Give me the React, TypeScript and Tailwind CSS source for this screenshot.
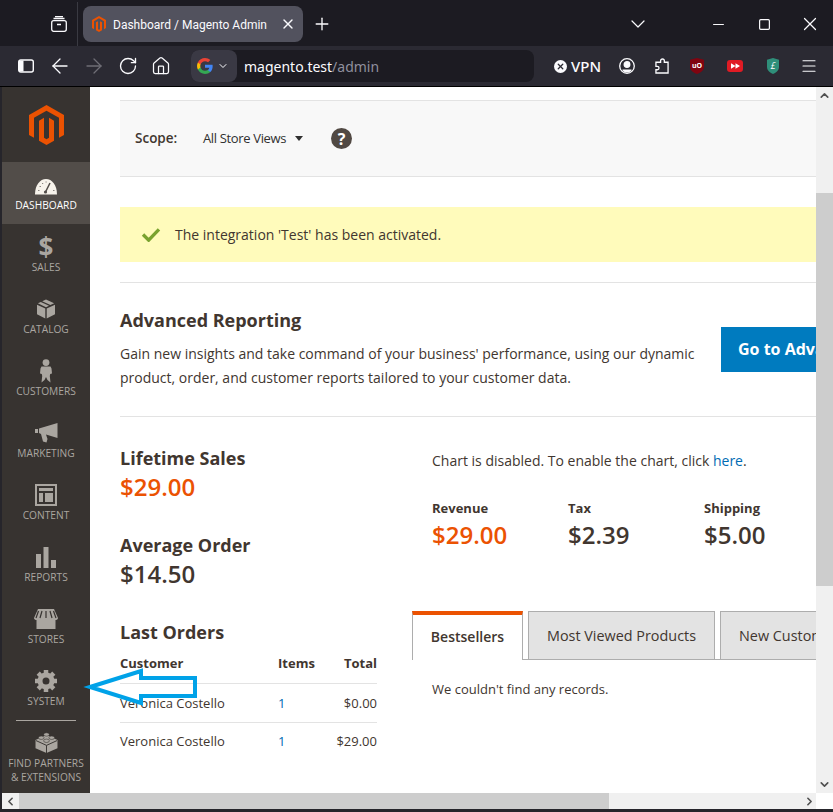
import React from 'react';
import { ArrowLeft, ArrowRight, ChevronDown, ChevronLeft, ChevronRight, ChevronUp, Home, Menu, Minus, Plus, RotateCw, Square, X } from 'lucide-react';

const openSans = { fontFamily: '"Open Sans", sans-serif' };

function MagentoLogo({ className }: { className?: string }) {
  return (
    <svg viewBox="1.600 0 20.800 24" className={className} fill="#eb5202" preserveAspectRatio="none">
      <path d="M12 24l-4.455-2.572v-12l2.97-1.715v12.001l1.485.902 1.485-.902V7.713l2.97 1.715v12L12 24zM22.391 6v12l-2.969 1.714V7.713L12 3.43 4.574 7.713v12L1.609 18V6L12 0l10.391 6z" />
    </svg>
  );
}

function DashboardIcon() {
  return (
    <svg viewBox="0 0 22 17" className="w-[22px] h-[17px]">
      <path d="M0 16.500C0 7 5 1 11 1s11 6 11 15.500z" fill="#f7f3eb" />
      <path d="M10.500 14L15 5" stroke="#524d49" strokeWidth="1.500" />
      <circle cx="10.500" cy="14" r="1.600" fill="#524d49" />
      <g fill="#8a8580">
        <rect x="3" y="12" width="1.500" height="1" />
        <rect x="4.500" y="8" width="1.500" height="1" />
        <rect x="7" y="5" width="1.200" height="1" />
        <rect x="10.500" y="3.500" width="1.200" height="1" />
        <rect x="18" y="12" width="1.500" height="1" />
      </g>
    </svg>
  );
}

function DollarIcon() {
  return <div className="h-[24px] text-[26px] leading-[24px] font-bold text-[#aaa6a0]" style={openSans}>$</div>;
}

function BoxIcon() {
  return (
    <svg viewBox="0 0 20 20" className="w-[20px] h-[20px]" fill="#aaa6a0">
      <path d="M9.300 9.600L1 5.800v9.400l8.300 4.300zM10.700 9.600L19 5.800v9.400l-8.300 4.300z" />
      <path d="M10 .5L6.200 2.200l8.200 3.800 3.700-1.700zM4.800 2.900L1.900 4.300 10 8.200l3-1.400z" />
    </svg>
  );
}

function PersonIcon() {
  return (
    <svg viewBox="0 0 14 24" className="w-[14px] h-[24px]" fill="#aaa6a0">
      <circle cx="7" cy="3.600" r="3.400" />
      <path d="M2.500 7.500h9l1 2 .5 5-1.800.5-.4 2 .7 6.500-3-2.500L7 18l-1.500 3-3 2.500.7-6.500-.4-2L1 14.500l.5-5z" />
    </svg>
  );
}

function MegaphoneIcon() {
  return (
    <svg viewBox="0 0 23 20" className="w-[23px] h-[20px]" fill="#aaa6a0">
      <rect x="0" y="6" width="3" height="4" />
      <path d="M4 5.500L22.500 0v15L11 11.500l1.500 4.500-1 3.500-3.500-1-2-7.500L4 10z" />
    </svg>
  );
}

function ContentIcon() {
  return (
    <svg viewBox="0 0 22 22" className="w-[22px] h-[22px]" fill="#aaa6a0">
      <path fillRule="evenodd" d="M0 0h22v22H0zM2 2v18h18V2z" />
      <rect x="4" y="4" width="14" height="3" />
      <rect x="4" y="9" width="4" height="9" />
      <rect x="10" y="9" width="8" height="9" />
    </svg>
  );
}

function ReportsIcon() {
  return (
    <svg viewBox="0 0 20 21" className="w-[20px] h-[21px]" fill="#aaa6a0">
      <rect x="0" y="7" width="5" height="14" />
      <rect x="7.500" y="0" width="5" height="21" />
      <rect x="15" y="13" width="5" height="8" />
    </svg>
  );
}

function StoresIcon() {
  return (
    <svg viewBox="0 0 24 20" className="w-[24px] h-[20px]" fill="#aaa6a0">
      <path d="M4 0h16l4 9c0 1.500-1.500 2-2.500 2v9h-19v-9C1.500 11 0 10.500 0 9z" />
      <g stroke="#373330" strokeWidth="1.200">
        <path d="M8 2L6 9M12 2v7M16 2l2 7M4.500 2L2 9M19.500 2L22 9" />
      </g>
    </svg>
  );
}

function GearIcon() {
  return (
    <svg viewBox="0 0 22 22" className="w-[22px] h-[22px]">
      <circle cx="11" cy="11" r="6" fill="none" stroke="#aaa6a0" strokeWidth="5" />
      <g stroke="#aaa6a0" strokeWidth="4.500">
        <path d="M11 0v4M11 18v4M0 11h4M18 11h4M3.200 3.200l2.800 2.800M16 16l2.800 2.800M3.200 18.800L6 16M16 6l2.800-2.800" />
      </g>
    </svg>
  );
}

function LegoIcon() {
  return (
    <svg viewBox="0 0 24 22" className="w-[23px] h-[21px]" fill="#aaa6a0">
      <path d="M12 3l11.500 5.500v8.500L12 22 .5 17V8.500z" />
      <path d="M1 9l11 5 11-5" fill="none" stroke="#373330" strokeWidth="1" />
      <path d="M12 14v8" stroke="#373330" strokeWidth="1" />
      <g stroke="#373330" strokeWidth=".6">
        <ellipse cx="12" cy="2.600" rx="3" ry="1.800" />
        <ellipse cx="6.500" cy="6" rx="3" ry="1.800" />
        <ellipse cx="17.500" cy="6" rx="3" ry="1.800" />
        <ellipse cx="12" cy="9.200" rx="3" ry="1.800" />
      </g>
    </svg>
  );
}

function GoogleIcon() {
  return (
    <svg viewBox="0 0 24 24" className="w-[16px] h-[16px]">
      <path fill="#4285F4" d="M23.500 12.300c0-.8-.1-1.600-.2-2.300H12v4.500h6.500c-.3 1.500-1.100 2.800-2.400 3.600v3h3.900c2.200-2.100 3.500-5.100 3.500-8.800z" />
      <path fill="#34A853" d="M12 24c3.200 0 6-1.100 8-2.900l-3.900-3c-1.100.7-2.500 1.200-4.100 1.200-3.100 0-5.800-2.100-6.700-5H1.300v3.100C3.300 21.300 7.300 24 12 24z" />
      <path fill="#FBBC05" d="M5.300 14.300c-.5-1.500-.5-3.100 0-4.600V6.600h-4c-1.700 3.300-1.700 7.500 0 10.800z" />
      <path fill="#EA4335" d="M12 4.700c1.800 0 3.400.6 4.600 1.800L20 3.100C18 1.200 15.200 0 12 0 7.300 0 3.300 2.700 1.300 6.600l4 3.100c.9-2.900 3.600-5 6.700-5z" />
    </svg>
  );
}

function ShieldIcon({ fill, className, children }: { fill: string; className: string; children: React.ReactNode }) {
  return (
    <svg viewBox="1 0 14 18" className={className} preserveAspectRatio="none">
      <path d="M8 0l7 2v8c0 4-4 6.500-7 8-3-1.500-7-4-7-8V2z" fill={fill} />
      {children}
    </svg>
  );
}

const navItems = [
  { label: 'Sales', icon: <DollarIcon /> },
  { label: 'Catalog', icon: <BoxIcon /> },
  { label: 'Customers', icon: <PersonIcon /> },
  { label: 'Marketing', icon: <MegaphoneIcon /> },
  { label: 'Content', icon: <ContentIcon /> },
  { label: 'Reports', icon: <ReportsIcon /> },
  { label: 'Stores', icon: <StoresIcon /> },
  { label: 'System', icon: <GearIcon /> },
];

function Sidebar() {
  return (
    <aside className="w-[88px] shrink-0 bg-[#373330] flex flex-col items-stretch">
      <div className="h-[75px] flex items-center justify-center">
        <MagentoLogo className="w-[35px] h-[40px]" />
      </div>
      <div className="h-[62px] bg-[#524d49] flex flex-col items-center justify-end pb-[12px] gap-[3px]">
        <DashboardIcon />
        <span className="text-[10.2px] leading-[14px] text-white uppercase">Dashboard</span>
      </div>
      {navItems.map((item) => (
        <div key={item.label} className="h-[62px] flex flex-col items-center justify-end pb-[12px]">
          <div className="h-[26px] flex items-center justify-center">{item.icon}</div>
          <span className="text-[10.2px] leading-[14px] text-[#aaa6a0] uppercase">{item.label}</span>
        </div>
      ))}
      <div className="h-px bg-[#aaa6a0] w-[60px] mx-auto" />
      <div className="flex flex-col items-center pt-[11px]">
        <LegoIcon />
        <span className="mt-[3px] text-[10.2px] leading-[14px] text-[#aaa6a0] uppercase text-center">
          Find Partners
          <br />
          & Extensions
        </span>
      </div>
    </aside>
  );
}

function Stat({ label, value, orange }: { label: string; value: string; orange?: boolean }) {
  return (
    <div className="w-[136px]">
      <div className="text-[13px] leading-[20px] font-bold text-[#41362f]">{label}</div>
      <div className={`mt-[1px] text-[24px] leading-[32px] font-semibold ${orange ? 'text-[#eb5202]' : 'text-[#41362f]'}`}>{value}</div>
    </div>
  );
}

function Dashboard() {
  return (
    <main className="flex-1 min-w-0 overflow-hidden bg-white text-[#41362f]">
      <div className="w-[1000px] pl-[30px] pt-[13px]">
        <div className="h-[77px] bg-[#f8f8f8] border-y border-[#e3e3e3] flex items-center pl-[15px]">
          <span className="text-[13.500px] font-semibold w-[68px]">Scope:</span>
          <span className="text-[13px] text-[#303030] tracking-[-0.35px]">All Store Views</span>
          <span className="ml-[9px] border-x-[4px] border-x-transparent border-t-[5px] border-t-[#303030]" />
          <span className="ml-[28px] w-[21px] h-[21px] rounded-full bg-[#514943] text-white text-[16px] font-bold flex items-center justify-center">?</span>
        </div>

        <div className="mt-[30px] h-[55px] bg-[#fffbbb] flex items-center pl-[21px] text-[14px]">
          <svg viewBox="0 0 20 16" className="w-[20px] h-[15px] mr-[14px]">
            <path d="M1.500 8l6 6L18.500 2.500" fill="none" stroke="#79a22e" strokeWidth="3.600" />
          </svg>
          The integration 'Test' has been activated.
        </div>

        <div className="mt-[20px] border-y border-[#e3e3e3] h-[135px] flex items-start">
          <div className="w-[601px] pt-[24px]">
            <h2 className="text-[18px] leading-[26px] font-bold">Advanced Reporting</h2>
            <p className="mt-[9px] text-[14px] leading-[24px]">
              Gain new insights and take command of your business' performance, using our dynamic
              <br />
              product, order, and customer reports tailored to your customer data.
            </p>
          </div>
          <div className="mt-[44px] h-[45px] w-[230px] bg-[#007bbf] text-white text-[16px] font-bold whitespace-nowrap flex items-center pl-[17px] pb-[2px]">
            Go to Advanced Reporting
          </div>
        </div>

        <div className="flex">
          <div className="w-[257px] pt-[28px]">
            <h2 className="text-[18px] leading-[26px] font-bold">Lifetime Sales</h2>
            <div className="text-[24px] leading-[32px] font-semibold text-[#eb5202]">$29.00</div>
            <h2 className="mt-[29px] text-[18px] leading-[26px] font-bold">Average Order</h2>
            <div className="text-[24px] leading-[32px] font-semibold">$14.50</div>
            <h2 className="mt-[29px] text-[18px] leading-[26px] font-bold">Last Orders</h2>
            <table className="w-full mt-[6px] text-[13px]">
              <thead>
                <tr className="h-[32px] border-b border-[#e3e3e3] text-[13px]">
                  <th className="text-left font-bold w-[158px] pb-[6px]">Customer</th>
                  <th className="text-left font-bold pb-[6px]">Items</th>
                  <th className="text-right font-bold pb-[6px]">Total</th>
                </tr>
              </thead>
              <tbody>
                <tr className="h-[39px] border-b border-[#e3e3e3]">
                  <td className="pt-[2px]">Veronica Costello</td>
                  <td className="pt-[2px] text-[#006bb4]">1</td>
                  <td className="pt-[2px] text-right">$0.00</td>
                </tr>
                <tr className="h-[38px]">
                  <td>Veronica Costello</td>
                  <td className="text-[#006bb4]">1</td>
                  <td className="text-right">$29.00</td>
                </tr>
              </tbody>
            </table>
          </div>

          <div className="ml-[55px] flex-1 pt-[34px]">
            <p className="text-[14px] leading-[20px]">
              Chart is disabled. To enable the chart, click <span className="text-[#006bb4]">here</span>.
            </p>
            <div className="mt-[27px] flex">
              <Stat label="Revenue" value="$29.00" orange />
              <Stat label="Tax" value="$2.39" />
              <Stat label="Shipping" value="$5.00" />
            </div>
            <div className="mt-[60px] flex gap-[5px] border-b border-[#adadad] h-[49px] w-[600px] -ml-[20px]">
              <div className="h-[49px] w-[111px] bg-white border-x border-x-[#adadad] border-t-[4px] border-t-[#eb5202] flex items-center justify-center text-[14px] font-semibold pb-[3px]">
                Bestsellers
              </div>
              <div className="h-[49px] w-[187px] bg-[#e3e3e3] border border-[#adadad] flex items-center justify-center text-[14.400px]">
                Most Viewed Products
              </div>
              <div className="h-[49px] w-[200px] bg-[#e3e3e3] border border-[#adadad] flex items-center pl-[18px] whitespace-nowrap text-[14.400px]">
                New Customers
              </div>
            </div>
            <p className="mt-[19px] text-[13px] leading-[20px]">We couldn't find any records.</p>
          </div>
        </div>
      </div>
    </main>
  );
}

export default function App() {
  return (
    <div className="relative w-[833px] h-[812px] overflow-hidden flex flex-col bg-[#1c1b22]" style={openSans}>
      {/* tab strip */}
      <div className="h-[46px] pt-[2px] bg-[#1c1b22] flex items-center text-[#fbfbfe]">
        <div className="w-[78px] h-full flex items-center justify-end border-r border-[#3a3a42] pr-[10px]">
          <svg viewBox="0 0 16 16" className="w-[16px] h-[16px]" fill="none" stroke="#fbfbfe" strokeWidth="1.300">
            <rect x=".7" y="4.700" width="14.600" height="10.600" rx="2" />
            <path d="M2.500 2.500h11M4 .7h8M6 8.500h4" />
          </svg>
        </div>
        <div className="ml-[5px] w-[220px] h-[36px] rounded-[8px] bg-[#52525e] flex items-center pl-[9px] text-[12px]" style={{ fontFamily: 'Roboto, sans-serif' }}>
          <MagentoLogo className="w-[14px] h-[16px] shrink-0" />
          <span className="ml-[7px] w-[155px] whitespace-nowrap pt-[1px]">Dashboard / Magento Admin</span>
          <X className="ml-[12px] w-[16px] h-[16px] shrink-0" strokeWidth={2} />
        </div>
        <Plus className="ml-[9px] w-[20px] h-[20px]" strokeWidth={1.600} />
        <ChevronDown className="ml-[294px] w-[24px] h-[24px]" strokeWidth={1.200} />
        <Minus className="ml-[60px] w-[17px] h-[17px]" strokeWidth={1.400} />
        <Square className="ml-[31px] w-[13px] h-[13px]" strokeWidth={2.200} />
        <X className="ml-[28px] w-[22px] h-[22px]" strokeWidth={1.300} />
      </div>

      {/* toolbar */}
      <div className="h-[41px] bg-[#2b2a33] border-b border-black flex items-center text-[#fbfbfe]">
        <svg viewBox="0 0 16 14" className="ml-[18px] w-[16px] h-[14px]" fill="none" stroke="#fbfbfe" strokeWidth="1.400">
          <rect x=".7" y="1" width="14.600" height="12" rx="2" />
          <rect x="1" y="1.500" width="4.500" height="11" fill="#fbfbfe" stroke="none" />
        </svg>
        <ArrowLeft className="ml-[14px] w-[24px] h-[24px]" strokeWidth={1.300} />
        <ArrowRight className="ml-[10px] w-[24px] h-[24px] text-[#6f6e76]" strokeWidth={1.300} />
        <RotateCw className="ml-[12px] w-[20px] h-[20px]" strokeWidth={1.600} />
        <Home className="ml-[13px] w-[20px] h-[20px]" strokeWidth={1.500} />
        <div className="ml-[20px] w-[343px] h-[32px] rounded-[8px] bg-[#1c1b22] flex items-center text-[14px]" style={{ fontFamily: '"Noto Sans", sans-serif' }}>
          <div className="h-full w-[46px] rounded-[8px] bg-[#3a3944] flex items-center pl-[6px] gap-[4px]">
            <GoogleIcon />
            <ChevronDown className="w-[12px] h-[12px]" />
          </div>
          <span className="ml-[7px]">magento.test<span className="text-[#8f8f9d]">/admin</span></span>
        </div>
        <span className="ml-[20px] w-[13px] h-[13px] rounded-full bg-[#fbfbfe] flex items-center justify-center">
          <X className="w-[9px] h-[9px] text-[#2b2a33]" strokeWidth={3.500} />
        </span>
        <span className="ml-[4px] text-[15px] font-medium" style={{ fontFamily: '"Noto Sans", sans-serif' }}>VPN</span>
        <svg viewBox="0 0 16 16" className="ml-[18px] w-[16px] h-[16px]" fill="none" stroke="#fbfbfe" strokeWidth="1.300">
          <circle cx="8" cy="8" r="7.300" />
          <circle cx="8" cy="6.500" r="2.800" fill="#fbfbfe" />
          <path d="M3.500 11.500h9v1l-2.500 2h-4l-2.500-2z" fill="#fbfbfe" stroke="none" />
        </svg>
        <svg viewBox="0 0 15 17" className="ml-[20px] w-[14px] h-[16px]" fill="none" stroke="#fbfbfe" strokeWidth="1.400">
          <path d="M6 4.500V3a2 2 0 0 1 4 0v1.500h4V16H1v-3.500h1.500a1.800 1.800 0 0 0 0-3.600H1V4.500z" />
        </svg>
        <span className="ml-[21px] flex">
          <ShieldIcon fill="#800410" className="w-[14px] h-[16px]">
            <text x="8" y="11" textAnchor="middle" fontSize="7" fill="#fff" fontWeight="700">uO</text>
          </ShieldIcon>
        </span>
        <span className="ml-[23px] w-[16px] h-[12px] rounded-[3px] bg-[#e01b24] flex items-center justify-center">
          <svg viewBox="0 0 10 6" className="w-[9px] h-[6px]" fill="#fff">
            <path d="M0 0l5 3-5 3zM5 0l5 3-5 3z" />
          </svg>
        </span>
        <span className="ml-[24px] flex">
          <ShieldIcon fill="#2f8f7a" className="w-[12px] h-[16px]">
            <text x="8" y="12" textAnchor="middle" fontSize="10" fill="#fff" fontStyle="italic">£</text>
          </ShieldIcon>
        </span>
        <Menu className="ml-[21px] w-[18px] h-[18px]" strokeWidth={1.500} />
      </div>

      {/* page */}
      <div className="h-[706px] flex">
        <div className="w-[2px] bg-[#26252b]" />
        <Sidebar />
        <Dashboard />
        <div className="w-[17px] bg-[#f0f0f0] flex flex-col items-center">
          <ChevronUp className="h-[17px] w-[13px] text-[#505050]" strokeWidth={3} />
          <div className="mt-[89px] h-[393px] w-full bg-[#cdcdcd]" />
          <div className="flex-1" />
          <ChevronDown className="h-[17px] w-[13px] text-[#505050]" strokeWidth={3} />
        </div>
      </div>

      {/* horizontal scrollbar */}
      <div className="h-[16px] flex bg-[#f0f0f0]">
        <div className="w-[2px] bg-[#26252b]" />
        <div className="w-[17px] flex items-center justify-center">
          <ChevronLeft className="w-[13px] h-[13px] text-[#505050]" strokeWidth={3} />
        </div>
        <div className="w-[590px] bg-[#cdcdcd]" />
        <div className="w-[198px]" />
        <div className="w-[9px] flex items-center">
          <ChevronRight className="w-[13px] h-[13px] shrink-0 -ml-[4px] text-[#505050]" strokeWidth={3} />
        </div>
        <div className="flex-1 bg-white" />
      </div>
      <div className="h-[3px] bg-[#26252b]" />

      {/* annotation arrow */}
      <svg viewBox="0 0 120 42" className="absolute left-[82px] top-[666px] w-[120px] h-[42px]" fill="none" stroke="#00a2e8" strokeWidth="4">
        <path d="M8 21L59 5v7h54v18H59v7z" />
      </svg>
    </div>
  );
}
